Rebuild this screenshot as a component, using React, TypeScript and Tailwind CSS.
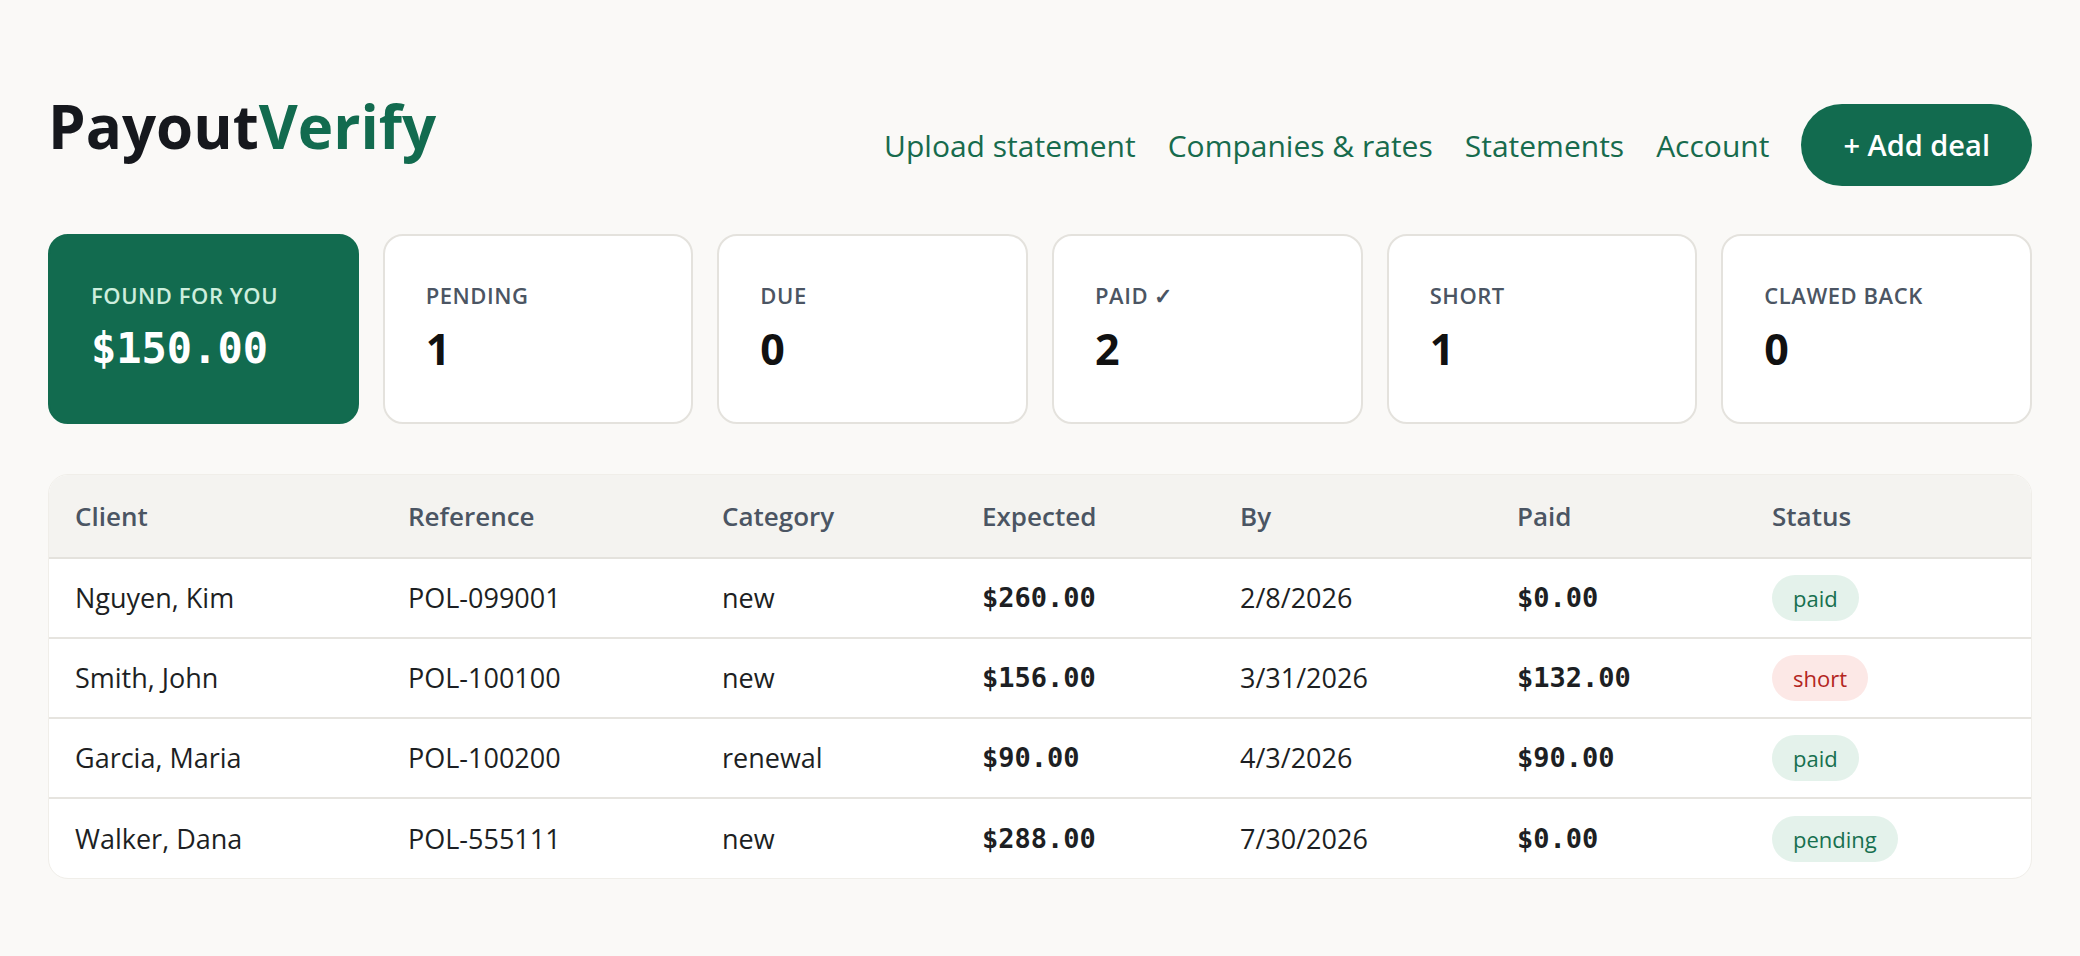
import React from 'react';

const stats = [
  { label: 'Pending', value: '1' },
  { label: 'Due', value: '0' },
  { label: 'Paid ✓', value: '2' },
  { label: 'Short', value: '1' },
  { label: 'Clawed back', value: '0' },
];

const deals = [
  { client: 'Nguyen, Kim', ref: 'POL-099001', category: 'new', expected: '$260.00', by: '2/8/2026', paid: '$0.00', status: 'paid' },
  { client: 'Smith, John', ref: 'POL-100100', category: 'new', expected: '$156.00', by: '3/31/2026', paid: '$132.00', status: 'short' },
  { client: 'Garcia, Maria', ref: 'POL-100200', category: 'renewal', expected: '$90.00', by: '4/3/2026', paid: '$90.00', status: 'paid' },
  { client: 'Walker, Dana', ref: 'POL-555111', category: 'new', expected: '$288.00', by: '7/30/2026', paid: '$0.00', status: 'pending' },
];

function StatusBadge({ status }: { status: string }) {
  const tone =
    status === 'short'
      ? 'bg-[#fce8e6] text-[#b3261e]'
      : 'bg-[#e4f2eb] text-[#17704f]';
  return (
    <span className={`inline-block rounded-full px-[21px] h-[46px] leading-[46px] text-[22px] font-medium ${tone}`}>
      {status}
    </span>
  );
}

export default function App() {
  return (
    <div className="min-h-screen bg-[#faf9f7] text-[#1d1f23] font-['Open_Sans',sans-serif]">
      <div className="px-12 pt-[104px] pb-20">
        {/* header */}
        <header className="flex items-start justify-between">
          <h1 className="text-[60px] leading-[44px] font-bold text-[#16181d]">
            Payout<span className="text-[#126b4f]">Verify</span>
          </h1>
          <nav className="flex items-center gap-8 text-[30px] text-[#176b4d]">
            <a href="#">Upload statement</a>
            <a href="#">Companies &amp; rates</a>
            <a href="#">Statements</a>
            <a href="#">Account</a>
            <button className="h-[82px] rounded-full bg-[#126b4f] px-[42px] text-[29px] font-semibold text-white">
              + Add deal
            </button>
          </nav>
        </header>

        {/* stat cards */}
        <div className="mt-12 grid grid-cols-6 gap-6">
          <div className="rounded-[20px] border-2 border-[#126b4f] bg-[#126b4f] pl-[41px] pt-[44px] pb-[49px]">
            <div className="text-[22px] leading-[30px] font-semibold uppercase tracking-wide text-[#cdeedd]">
              Found for you
            </div>
            <div className="mt-[15px] text-[42px] leading-[48px] font-bold text-white font-['DejaVu_Sans_Mono',monospace]">
              $150.00
            </div>
          </div>
          {stats.map((s) => (
            <div key={s.label} className="rounded-[20px] border-2 border-[#e4e2dd] bg-white pl-[41px] pt-[44px] pb-[49px]">
              <div className="text-[22px] leading-[30px] font-semibold uppercase tracking-wide text-[#4b5563]">
                {s.label}
              </div>
              <div className="mt-[15px] text-[43px] leading-[48px] font-bold text-[#111]">{s.value}</div>
            </div>
          ))}
        </div>

        {/* deals table */}
        <div className="mt-[50px] overflow-hidden rounded-[20px] border border-[#f0eee9] bg-white">
          <table className="w-full table-fixed border-collapse text-left">
            <thead className="bg-[#f4f3f0]">
              <tr className="border-b-2 border-[#e4e2dd] text-[26px] leading-[36px] font-semibold text-[#4b5563]">
                <th className="w-[333px] px-[26px] py-[23px] font-semibold">Client</th>
                <th className="w-[314px] px-[26px] py-[23px] font-semibold">Reference</th>
                <th className="w-[260px] px-[26px] py-[23px] font-semibold">Category</th>
                <th className="w-[258px] px-[26px] py-[23px] font-semibold">Expected</th>
                <th className="w-[277px] px-[26px] py-[23px] font-semibold">By</th>
                <th className="w-[255px] px-[26px] py-[23px] font-semibold">Paid</th>
                <th className="px-[26px] py-[23px] font-semibold">Status</th>
              </tr>
            </thead>
            <tbody className="text-[27px] leading-[36px]">
              {deals.map((d, i) => (
                <tr key={d.ref} className={i < deals.length - 1 ? 'border-b-2 border-[#e6e4df]' : ''}>
                  <td className="h-[80px] px-[26px]">{d.client}</td>
                  <td className="px-[26px]">{d.ref}</td>
                  <td className="px-[26px]">{d.category}</td>
                  <td className="px-[26px] font-bold font-['DejaVu_Sans_Mono',monospace]">{d.expected}</td>
                  <td className="px-[26px]">{d.by}</td>
                  <td className="px-[26px] font-bold font-['DejaVu_Sans_Mono',monospace]">{d.paid}</td>
                  <td className="px-[26px]">
                    <StatusBadge status={d.status} />
                  </td>
                </tr>
              ))}
            </tbody>
          </table>
        </div>
      </div>
    </div>
  );
}
